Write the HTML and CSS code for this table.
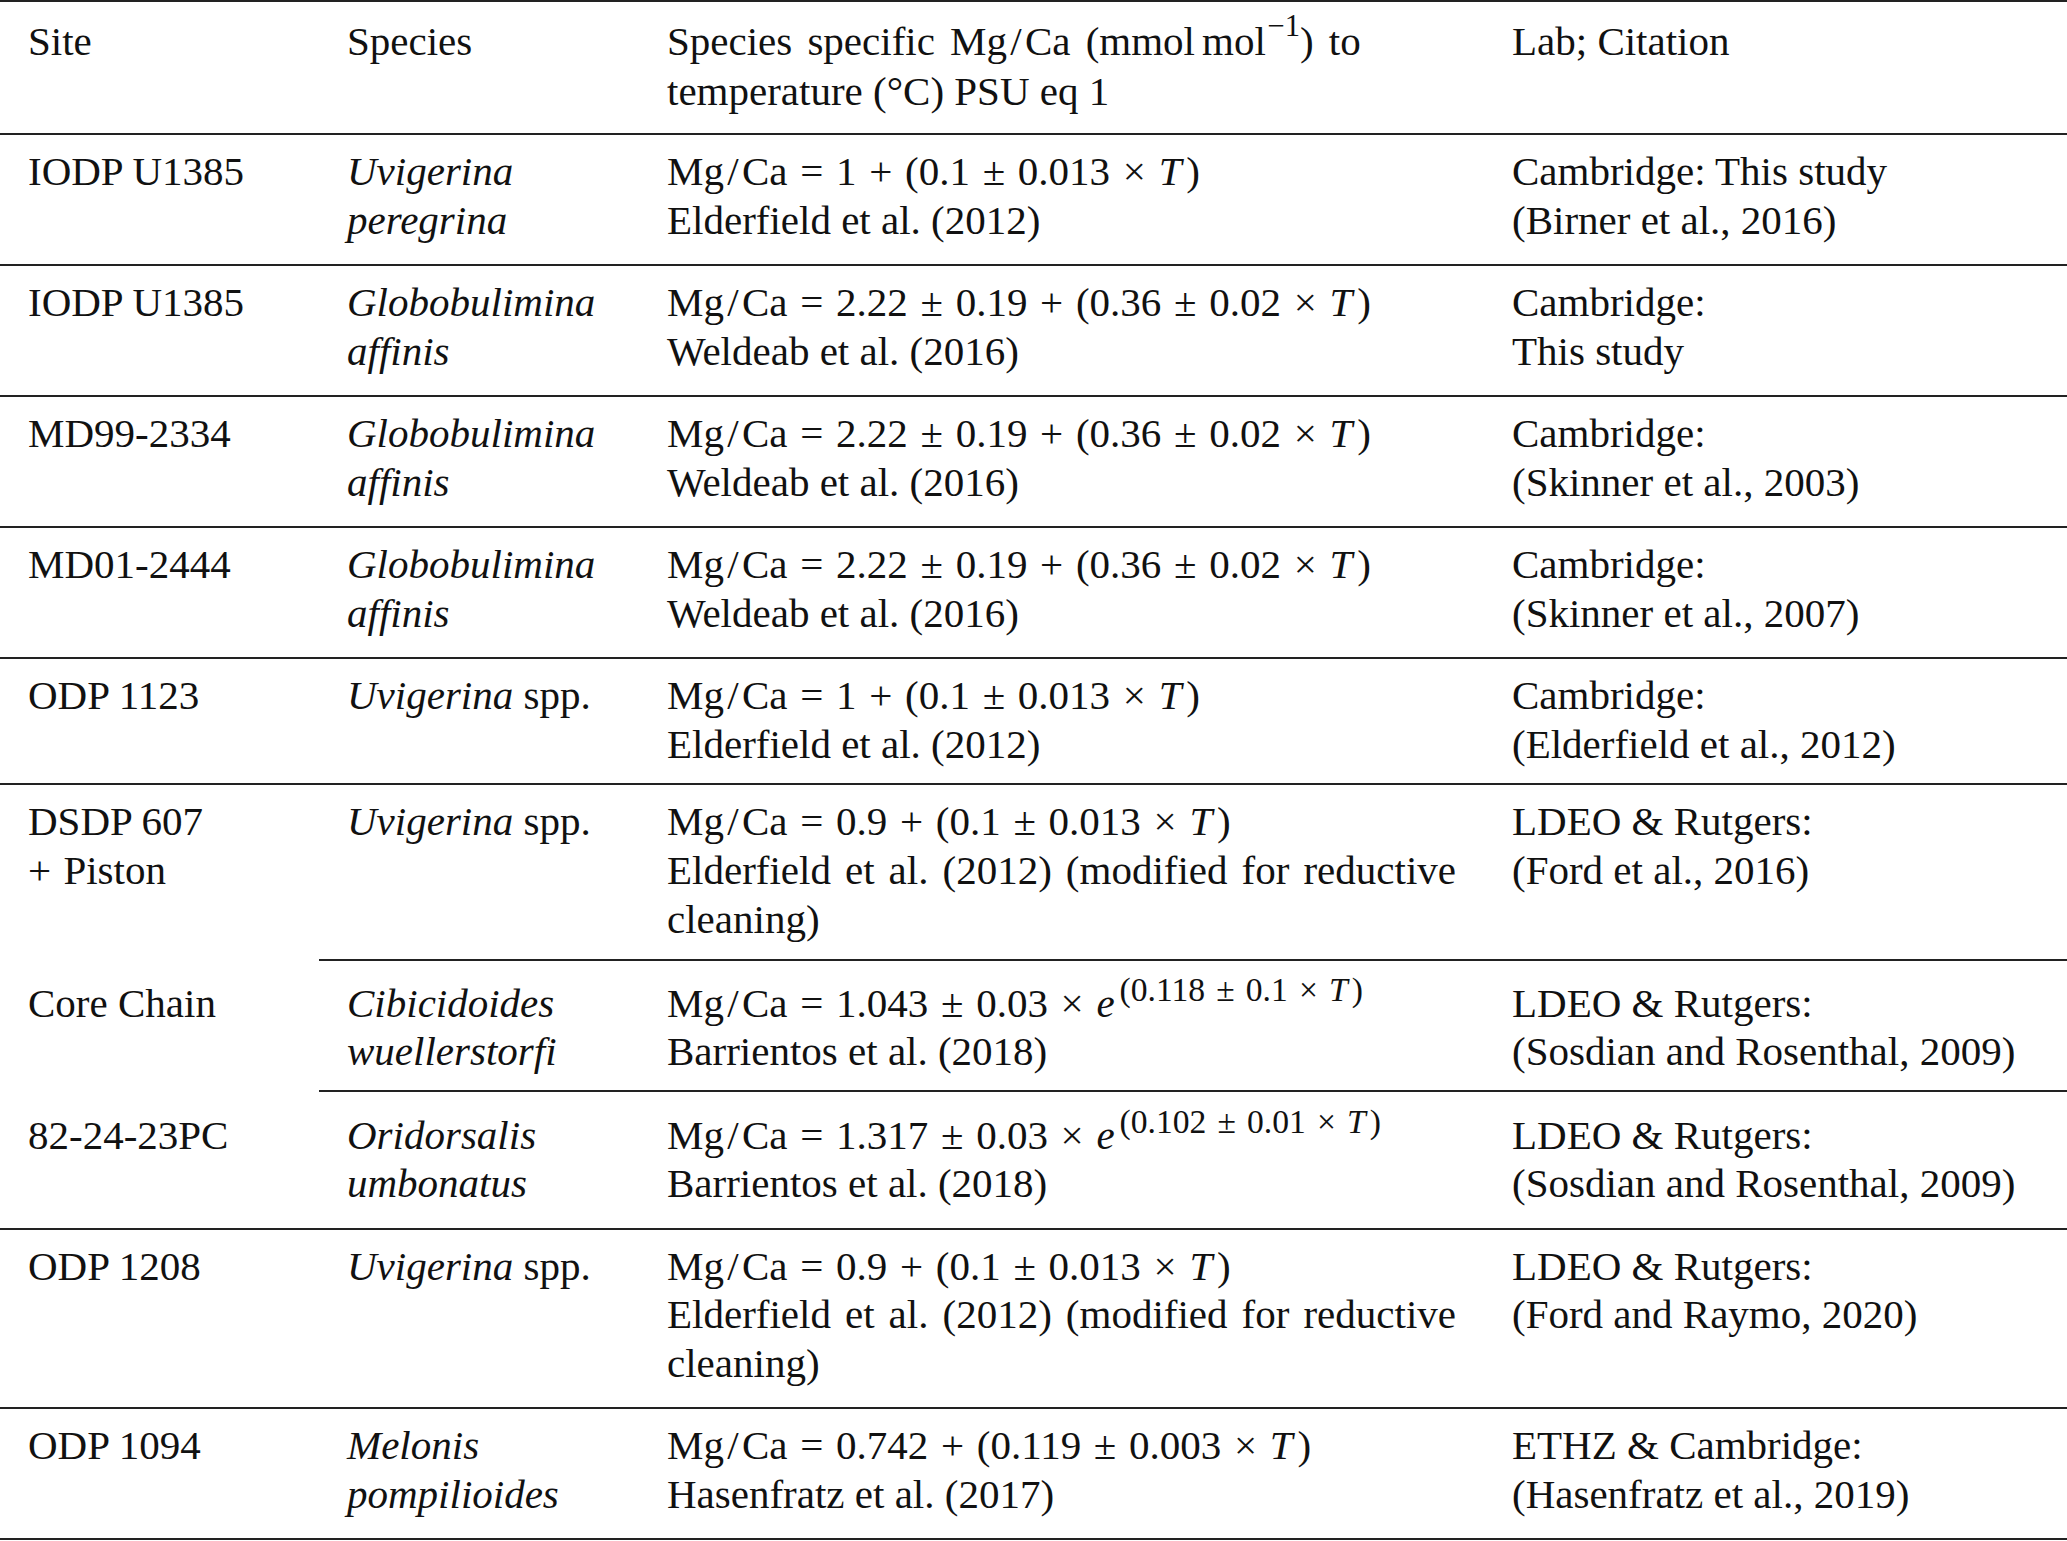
FILE: index.html
```html
<!DOCTYPE html>
<html lang="en">
<head>
<meta charset="utf-8">
<title>Mg/Ca calibrations</title>
<link rel="stylesheet" href="styles.css">
</head>
<body>
<table class="data">
  <colgroup>
    <col class="c-site">
    <col class="c-sp">
    <col class="c-eq">
    <col class="c-lab">
  </colgroup>
  <thead>
    <tr>
      <th>Site</th>
      <th>Species</th>
      <th><span class="hd-line">Species specific Mg<span class="sl">/</span>Ca (mmol<span class="thin"></span>mol<sup class="sup">−1</sup>) to</span><br>temperature (°C) PSU eq 1</th>
      <th>Lab; Citation</th>
    </tr>
  </thead>
  <tbody>
    <tr>
      <td>IODP U1385</td>
      <td><i>Uvigerina<br>peregrina</i></td>
      <td>Mg<span class="sl">/</span>Ca<span class="op">=</span>1<span class="op">+</span>(0.1<span class="op">±</span>0.013<span class="op">×</span><i class="v">T</i>)<br>Elderfield et al. (2012)</td>
      <td>Cambridge: This study<br>(Birner et al., 2016)</td>
    </tr>
    <tr>
      <td>IODP U1385</td>
      <td><i>Globobulimina<br>affinis</i></td>
      <td>Mg<span class="sl">/</span>Ca<span class="op">=</span>2.22<span class="op">±</span>0.19<span class="op">+</span>(0.36<span class="op">±</span>0.02<span class="op">×</span><i class="v">T</i>)<br>Weldeab et al. (2016)</td>
      <td>Cambridge:<br>This study</td>
    </tr>
    <tr>
      <td>MD99-2334</td>
      <td><i>Globobulimina<br>affinis</i></td>
      <td>Mg<span class="sl">/</span>Ca<span class="op">=</span>2.22<span class="op">±</span>0.19<span class="op">+</span>(0.36<span class="op">±</span>0.02<span class="op">×</span><i class="v">T</i>)<br>Weldeab et al. (2016)</td>
      <td>Cambridge:<br>(Skinner et al., 2003)</td>
    </tr>
    <tr>
      <td>MD01-2444</td>
      <td><i>Globobulimina<br>affinis</i></td>
      <td>Mg<span class="sl">/</span>Ca<span class="op">=</span>2.22<span class="op">±</span>0.19<span class="op">+</span>(0.36<span class="op">±</span>0.02<span class="op">×</span><i class="v">T</i>)<br>Weldeab et al. (2016)</td>
      <td>Cambridge:<br>(Skinner et al., 2007)</td>
    </tr>
    <tr class="row-tight">
      <td>ODP 1123</td>
      <td><i>Uvigerina</i> spp.</td>
      <td>Mg<span class="sl">/</span>Ca<span class="op">=</span>1<span class="op">+</span>(0.1<span class="op">±</span>0.013<span class="op">×</span><i class="v">T</i>)<br>Elderfield et al. (2012)</td>
      <td>Cambridge:<br>(Elderfield et al., 2012)</td>
    </tr>
    <tr class="row-tight">
      <td class="open">DSDP 607<br><span class="plus">+</span>Piston</td>
      <td><i>Uvigerina</i> spp.</td>
      <td>Mg<span class="sl">/</span>Ca<span class="op">=</span>0.9<span class="op">+</span>(0.1<span class="op">±</span>0.013<span class="op">×</span><i class="v">T</i>)<br><span class="just">Elderfield et al. (2012) (modified for reductive</span>cleaning)</td>
      <td>LDEO &amp; Rutgers:<br>(Ford et al., 2016)</td>
    </tr>
    <tr class="row-exp row-tight">
      <td class="open">Core Chain</td>
      <td><i>Cibicidoides<br>wuellerstorfi</i></td>
      <td>Mg<span class="sl">/</span>Ca<span class="op">=</span>1.043<span class="op">±</span>0.03<span class="op">×</span><i class="v">e</i><sup class="exp">(0.118<span class="sop">±</span>0.1<span class="sop">×</span><i class="v">T</i>)</sup><br>Barrientos et al. (2018)</td>
      <td>LDEO &amp; Rutgers:<br>(Sosdian and Rosenthal, 2009)</td>
    </tr>
    <tr class="row-exp">
      <td>82-24-23PC</td>
      <td><i>Oridorsalis<br>umbonatus</i></td>
      <td>Mg<span class="sl">/</span>Ca<span class="op">=</span>1.317<span class="op">±</span>0.03<span class="op">×</span><i class="v">e</i><sup class="exp">(0.102<span class="sop">±</span>0.01<span class="sop">×</span><i class="v">T</i>)</sup><br>Barrientos et al. (2018)</td>
      <td>LDEO &amp; Rutgers:<br>(Sosdian and Rosenthal, 2009)</td>
    </tr>
    <tr>
      <td>ODP 1208</td>
      <td><i>Uvigerina</i> spp.</td>
      <td>Mg<span class="sl">/</span>Ca<span class="op">=</span>0.9<span class="op">+</span>(0.1<span class="op">±</span>0.013<span class="op">×</span><i class="v">T</i>)<br><span class="just">Elderfield et al. (2012) (modified for reductive</span>cleaning)</td>
      <td>LDEO &amp; Rutgers:<br>(Ford and Raymo, 2020)</td>
    </tr>
    <tr>
      <td>ODP 1094</td>
      <td><i>Melonis<br>pompilioides</i></td>
      <td>Mg<span class="sl">/</span>Ca<span class="op">=</span>0.742<span class="op">+</span>(0.119<span class="op">±</span>0.003<span class="op">×</span><i class="v">T</i>)<br>Hasenfratz et al. (2017)</td>
      <td>ETHZ &amp; Cambridge:<br>(Hasenfratz et al., 2019)</td>
    </tr>
  </tbody>
</table>
</body>
</html>
```
FILE: styles.css
```css
html, body {
  margin: 0;
  padding: 0;
  background: #ffffff;
}

body {
  font-family: "Liberation Serif", "Times New Roman", serif;
  font-size: 41px;
  line-height: 48.7px;
  color: #111111;
}

.data {
  width: 2067px;
  table-layout: fixed;
  border-collapse: separate;
  border-spacing: 0;
}

.c-site { width: 319px; }
.c-sp { width: 320px; }
.c-eq { width: 845px; }
.c-lab { width: 583px; }

.data th,
.data td {
  text-align: left;
  vertical-align: top;
  white-space: nowrap;
  font-weight: normal;
  padding: 12px 28px 19.6px 28px;
  border-bottom: 2px solid #222222;
}

.data th {
  border-top: 2px solid #222222;
  line-height: 50.5px;
  padding-top: 13.5px;
  padding-bottom: 16.5px;
}

.hd-line {
  word-spacing: 0.12em;
}

.data .row-tight td {
  padding-bottom: 15px;
}

.data .row-exp td {
  padding-top: 19px;
}

.data .row-exp.row-tight td {
  padding-top: 18px;
  padding-bottom: 13.6px;
}

.data td.open {
  border-bottom: none;
}

i {
  font-style: italic;
}

.v {
  font-style: italic;
  margin-right: 0.12em;
}

.sl {
  margin: 0 0.08em;
}

.op {
  margin: 0 0.31em;
}

.plus {
  margin-right: 0.3em;
}

.thin {
  display: inline-block;
  width: 0.17em;
}

.sup {
  font-size: 0.75em;
  line-height: 0;
  vertical-align: 0.6em;
  margin-left: 0.05em;
  word-spacing: 0;
}

.exp {
  font-size: 0.82em;
  line-height: 0;
  vertical-align: 0.45em;
  margin-left: 0;
  word-spacing: 0;
}

.sop {
  margin: 0 0.33em;
}

.just {
  display: block;
  text-align: justify;
  text-align-last: justify;
}
```
